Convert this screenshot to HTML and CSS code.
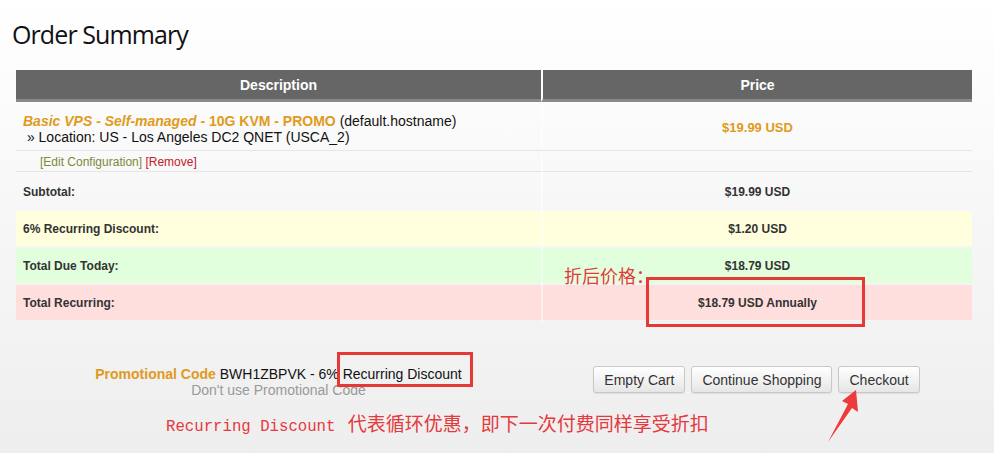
FILE: index.html
```html
<!DOCTYPE html>
<html>
<head>
<title>Order Summary</title>
<link rel="stylesheet" href="styles.css">
<meta charset="utf-8">
</head>
<body>
<div class="page">

<h1 class="title">Order Summary</h1>

<div class="cart">

<div class="row head">
<div>Description</div>
<div>Price</div>
</div>

<div class="row item">
<div class="desc">
<p><span class="product"><em>Basic VPS - Self-managed</em> - 10G KVM - PROMO</span> (default.hostname)<br>
&nbsp;&raquo; Location: US - Los Angeles DC2 QNET (USCA_2)</p>
</div>
<div class="price amount">$19.99 USD</div>
</div>

<div class="row edit">
<div><span class="edit-link">[Edit Configuration]</span> <span class="remove-link">[Remove]</span></div>
<div></div>
</div>

<div class="row total subtotal">
<div>Subtotal:</div>
<div class="price">$19.99 USD</div>
</div>

<div class="row total discount">
<div>6% Recurring Discount:</div>
<div class="price">$1.20 USD</div>
</div>

<div class="row total due">
<div>Total Due Today:</div>
<div class="price">$18.79 USD</div>
</div>

<div class="row total recurring">
<div>Total Recurring:</div>
<div class="price">$18.79 USD Annually</div>
</div>

</div>

<div class="cart-footer">
<div class="promo">
<div><span class="promo-label">Promotional Code</span> BWH1ZBPVK - 6% Recurring Discount</div>
<div class="promo-remove">Don't use Promotional Code</div>
</div>
<div class="buttons">
<button class="btn">Empty Cart</button>
<button class="btn">Continue Shopping</button>
<button class="btn">Checkout</button>
</div>
</div>

<!-- annotations drawn over the screenshot -->
<div class="note note-price">折后价格：</div>
<div class="mark mark-price"></div>
<div class="mark mark-promo"></div>
<div class="note note-recurring"><span class="mono">Recurring Discount</span> 代表循环优惠，即下一次付费同样享受折扣</div>
<svg class="arrow" width="40" height="56" viewBox="0 0 40 56">
<polygon points="30,2 32,24 26,20 2,54 22,16 16,13" fill="#ee3a3a"/>
</svg>

</div>
</body>
</html>
```

FILE: styles.css
```css
*
{
padding:0;
margin:0;
box-sizing:border-box;
}

body
{
font-family:"Liberation Sans", Arial, sans-serif;
color:#333;
}

.page
{
position:relative;
width:994px;
height:453px;
background:linear-gradient(#ffffff, #eeeeee);
overflow:hidden;
}

.title
{
font-family:"Open Sans", sans-serif;
font-weight:400;
font-size:25px;
letter-spacing:-0.9px;
line-height:34px;
color:#111;
padding:17px 0 0 12px;
height:70px;
}

.cart
{
width:956px;
margin-left:16px;
}

.row
{
display:grid;
grid-template-columns:525px 1fr;
}

.row > div + div
{
border-left:2px solid rgba(255,255,255,0.5);
}

.head div
{
background-color:#666;
color:#fff;
font-weight:bold;
font-size:14px;
text-align:center;
height:32px;
line-height:30px;
border-bottom:3px solid #898989;
}

.head div + div
{
border-left:2px solid #fff;
}

.item
{
height:49px;
border-bottom:1px solid #e6e6e6;
}

.item > div
{
display:flex;
align-items:center;
}

.desc
{
font-size:14px;
line-height:16px;
color:#111;
padding:5px 0 0 7px;
}

.product
{
color:#e09a1c;
font-weight:bold;
}

.price
{
justify-content:center;
text-align:center;
}

.amount
{
color:#e09a1c;
font-weight:bold;
font-size:13px;
padding-top:3px;
}

.edit
{
height:21px;
border-bottom:1px solid #e6e6e6;
font-size:12px;
line-height:23px;
}

.edit > div:first-child
{
padding-left:24px;
}

.edit-link
{
color:#7b8a3a;
}

.remove-link
{
color:#c0202a;
}

.total
{
height:36px;
font-size:12px;
font-weight:bold;
line-height:37px;
color:#333;
}

.total > div:first-child
{
padding-left:7px;
}

.subtotal
{
height:37px;
line-height:40px;
}

.discount,.due,.recurring
{
margin-top:2px;
height:35px;
}

.discount
{
background-color:#ffffdd;
}

.due
{
background-color:#e1ffdc;
}

.recurring
{
background-color:#ffdede;
}

.cart-footer
{
display:grid;
grid-template-columns:525px 1fr;
width:956px;
margin-left:16px;
padding-top:46px;
}

.promo
{
text-align:center;
font-size:14px;
line-height:16px;
color:#111;
}

.promo-label
{
color:#e09a1c;
font-weight:bold;
}

.promo-remove
{
color:#999;
}

.buttons
{
display:flex;
justify-content:center;
gap:6px;
}

.btn
{
font-family:"Liberation Sans", Arial, sans-serif;
font-size:14px;
color:#333;
height:27px;
padding:0 10px;
border:1px solid #c8c8c8;
border-radius:3px;
background:linear-gradient(#ffffff, #e6e6e6);
box-shadow:0 1px 1px rgba(0,0,0,0.08);
}

/* annotations */
.note
{
position:absolute;
color:#e5393e;
white-space:nowrap;
}

.note-price
{
left:564px;
top:262px;
font-family:"Noto Sans CJK SC", sans-serif;
font-size:18px;
line-height:26px;
}

.note-recurring
{
left:166px;
top:410px;
font-family:"Noto Sans CJK SC", sans-serif;
font-size:19px;
line-height:26px;
}

.mono
{
font-family:"Liberation Mono", monospace;
font-size:15.7px;
margin-right:8px;
}

.mark
{
position:absolute;
border:3px solid #e53935;
}

.mark-price
{
left:646px;
top:277px;
width:219px;
height:50px;
}

.mark-promo
{
left:337px;
top:352px;
width:136px;
height:35px;
}

.arrow
{
position:absolute;
left:826px;
top:388px;
}
```
